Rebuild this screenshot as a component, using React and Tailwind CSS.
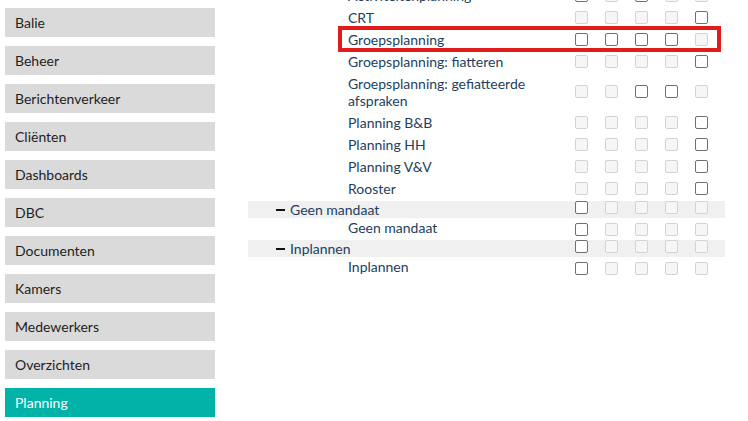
const menuItems = [
  'Balie',
  'Beheer',
  'Berichtenverkeer',
  'Cliënten',
  'Dashboards',
  'DBC',
  'Documenten',
  'Kamers',
  'Medewerkers',
  'Overzichten',
  'Planning',
];

// e = enabled, d = disabled
const rows = [
  { type: 'item', label: 'Activiteitenplanning', boxes: 'ededd' },
  { type: 'item', label: 'CRT', boxes: 'dddde' },
  { type: 'item', label: 'Groepsplanning', boxes: 'eeeed', marked: true },
  { type: 'item', label: 'Groepsplanning: fiatteren', boxes: 'dddde' },
  { type: 'item', label: ['Groepsplanning: gefiatteerde', 'afspraken'], boxes: 'ddeed' },
  { type: 'item', label: 'Planning B&B', boxes: 'dddde' },
  { type: 'item', label: 'Planning HH', boxes: 'dddde' },
  { type: 'item', label: 'Planning V&V', boxes: 'dddde' },
  { type: 'item', label: 'Rooster', boxes: 'dddde' },
  { type: 'group', label: 'Geen mandaat', boxes: 'edddd' },
  { type: 'child', label: 'Geen mandaat', boxes: 'edddd' },
  { type: 'group', label: 'Inplannen', boxes: 'edddd' },
  { type: 'child', label: 'Inplannen', boxes: 'edddd' },
];

const Box = ({ enabled }) => (
  <span
    className={`block w-[13px] h-[13px] rounded-[2px] border ${
      enabled ? 'border-[#6f6f6f] bg-white' : 'border-[#d3d3d3] bg-[#f6f6f6]'
    }`}
  />
);

const Boxes = ({ boxes, className = '' }) => (
  <div className={`flex gap-[17px] ml-auto mr-[17px] ${className}`}>
    {boxes.split('').map((b, i) => (
      <Box key={i} enabled={b === 'e'} />
    ))}
  </div>
);

const Row = ({ row }) => {
  if (row.type === 'group') {
    return (
      <div className="pt-[2px] pb-[2px]">
        <div className="h-[17px] bg-[#f0f0f0] flex items-center">
          <span className="ml-[28px] w-[9px] h-[2px] bg-[#111]" />
          <span className="ml-[5px] leading-[17px]">{row.label}</span>
          <Boxes boxes={row.boxes} className="-mt-[5px]" />
        </div>
      </div>
    );
  }

  if (row.type === 'child') {
    return (
      <div className="h-[18px] flex items-center">
        <span className="pl-[100px] leading-[17px] -mt-[3px]">{row.label}</span>
        <Boxes boxes={row.boxes} className="mt-[1px]" />
      </div>
    );
  }

  const multi = Array.isArray(row.label);
  return (
    <div className={`relative flex items-center ${multi ? 'h-[39px]' : 'h-[22px]'}`}>
      <span className="pl-[100px] leading-[17px]">
        {multi ? (
          <>
            {row.label[0]}
            <br />
            {row.label[1]}
          </>
        ) : (
          row.label
        )}
      </span>
      <Boxes boxes={row.boxes} />
      {row.marked && (
        <span className="absolute left-[90px] top-[-2.5px] w-[383px] h-[26px] border-[4px] border-[#e21b1b]" />
      )}
    </div>
  );
};

export default function App() {
  return (
    <div
      className="w-[748px] h-[421px] overflow-hidden bg-white flex text-[14px]"
      style={{ fontFamily: 'Lato, "Open Sans", sans-serif' }}
    >
      {/* Sidebar menu */}
      <div className="w-[210px] ml-[5px] pt-[8px] flex flex-col gap-[9px] shrink-0">
        {menuItems.map((item) => (
          <div
            key={item}
            className={`h-[29px] pl-[10px] flex items-center ${
              item === 'Planning' ? 'bg-[#00b2a7] text-white' : 'bg-[#dadada] text-[#1e1e1e]'
            }`}
          >
            {item}
          </div>
        ))}
      </div>

      {/* Rights table */}
      <div className="ml-[33px] w-[477px] mt-[-16px] text-[#1c3f5f]">
        {rows.map((row, i) => (
          <Row key={i} row={row} />
        ))}
      </div>
    </div>
  );
}
